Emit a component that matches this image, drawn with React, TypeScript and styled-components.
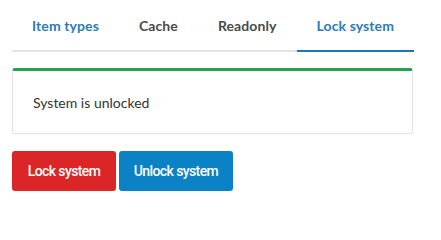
import React, { useState } from "react"
import styled, { createGlobalStyle } from "styled-components"

const GlobalStyle = createGlobalStyle`
  body {
    margin: 0;
    background: #fff;
    font-family: "Lato", "Open Sans", sans-serif;
  }
`

const Page = styled.div`
  padding: 0 28px 0 12px;
`

const TabBar = styled.nav`
  display: flex;
  border-bottom: 2px solid #e3e3e3;
  height: 50px;
`

const Tab = styled.button<{ $active?: boolean; $link?: boolean }>`
  flex: none;
  white-space: nowrap;
  background: none;
  border: none;
  padding: 0 20px;
  margin-bottom: -2px;
  font-family: "Lato", "Open Sans", sans-serif;
  font-size: 14px;
  font-weight: 700;
  letter-spacing: 0.1px;
  color: ${p => (p.$active || p.$link ? "#2b7bb9" : "#4a4a4a")};
  border-bottom: 2px solid ${p => (p.$active ? "#1a78b8" : "transparent")};
  cursor: pointer;
`

const Panel = styled.div`
  margin-top: 16px;
  border: 1px solid #e2e2e2;
  border-top: 3px solid #27a04f;
  border-radius: 3px;
  height: 62px;
  display: flex;
  align-items: center;
  padding: 0 20px;
  font-size: 14px;
  color: #333;
`

const Actions = styled.div`
  display: flex;
  gap: 3px;
  margin-top: 17px;
`

const ActionButton = styled.button<{ $tone: "danger" | "primary"; $w: number }>`
  width: ${p => p.$w}px;
  height: 40px;
  border: none;
  border-radius: 3px;
  color: #fff;
  font-family: "Roboto", sans-serif;
  font-weight: 500;
  font-size: 14px;
  letter-spacing: -0.6px;
  padding: 0;
  background: ${p => (p.$tone === "danger" ? "#db2527" : "#0b81c6")};
  cursor: pointer;
`

const tabs = ["Item types", "Cache", "Readonly", "Lock system"]

export default function App() {
  const [active, setActive] = useState("Lock system")
  const [locked, setLocked] = useState(false)
  return (
    <Page>
      <GlobalStyle />
      <TabBar>
        {tabs.map(t => (
          <Tab key={t} $active={t === active} $link={t === "Item types"} onClick={() => setActive(t)}>{t}</Tab>
        ))}
      </TabBar>
      <Panel>System is {locked ? "locked" : "unlocked"}</Panel>
      <Actions>
        <ActionButton $tone="danger" $w={104} onClick={() => setLocked(true)}>Lock system</ActionButton>
        <ActionButton $tone="primary" $w={114} onClick={() => setLocked(false)}>Unlock system</ActionButton>
      </Actions>
    </Page>
  )
}
